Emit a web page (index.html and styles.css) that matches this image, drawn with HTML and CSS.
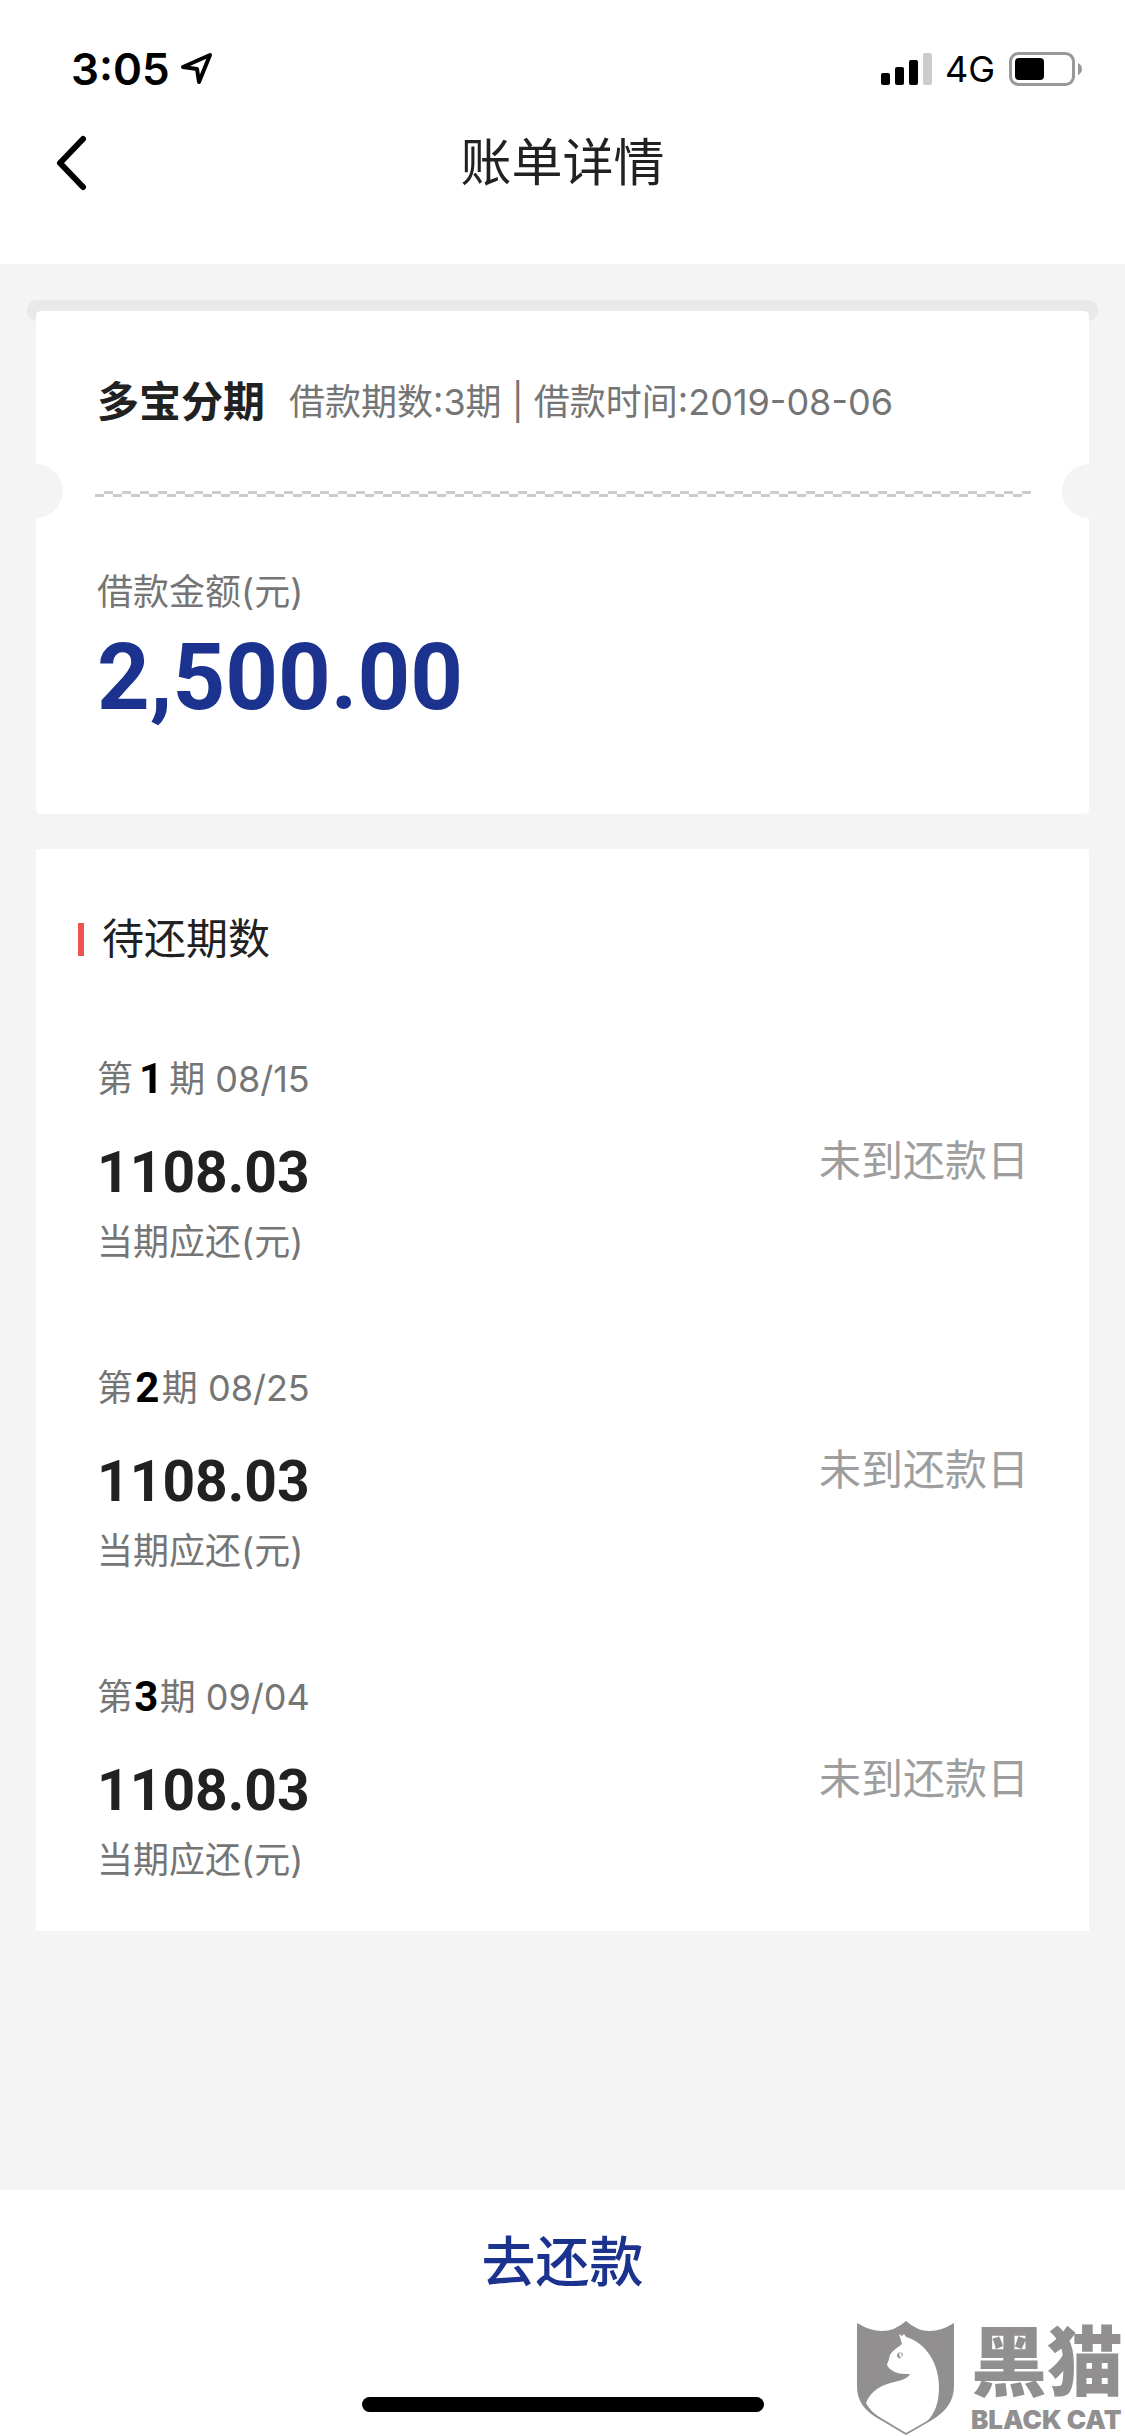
FILE: index.html
```html
<!DOCTYPE html>
<html lang="zh-CN">
<head>
	<meta charset="utf-8">
	<meta name="viewport" content="width=device-width">
	<title>账单详情</title>
	<link rel="stylesheet" href="styles.css">
</head>
<body>
	<header class="header">
		<div class="status-bar">
			<span class="time">3:05</span>
			<svg class="location" width="34" height="34" viewBox="0 0 34 34"><path d="M3 15 30 3 19 30 17 17Z" fill="none" stroke="#000" stroke-width="4" stroke-linejoin="round"/></svg>
			<svg class="signal" width="52" height="34" viewBox="0 0 52 34">
				<rect x="0" y="21" width="9" height="12" rx="2"/>
				<rect x="14" y="15" width="9" height="18" rx="2"/>
				<rect x="28" y="8" width="9" height="25" rx="2"/>
				<rect x="42" y="1" width="9" height="32" rx="2" fill="#ccc"/>
			</svg>
			<span class="network">4G</span>
			<svg class="battery" width="74" height="34" viewBox="0 0 74 34">
				<rect x="1.5" y="1.5" width="63" height="31" rx="8" fill="none" stroke="#999" stroke-width="3"/>
				<rect x="6" y="6" width="29" height="22" rx="4"/>
				<path d="M69 11Q73 13 73 17T69 23Z" fill="#999"/>
			</svg>
		</div>
		<div class="nav-bar">
			<button class="back" type="button" aria-label="返回">
				<svg width="32" height="56" viewBox="0 0 32 56"><path d="M28 4 5 28 28 52" fill="none" stroke="#000" stroke-width="6" stroke-linecap="round" stroke-linejoin="round"/></svg>
			</button>
			<h1 class="title">账单详情</h1>
		</div>
	</header>

	<main class="content">
		<div class="slot"></div>
		<section class="card ticket">
			<div class="ticket-head">
				<h2 class="product">多宝分期</h2>
				<span class="meta">借款期数:3期 | 借款时间:2019-08-06</span>
			</div>
			<div class="tear"></div>
			<div class="ticket-body">
				<div class="label">借款金额(元)</div>
				<div class="total">2,500.00</div>
			</div>
		</section>

		<section class="card plan">
			<h2 class="plan-title">待还期数</h2>
			<ul class="terms">
				<li class="term">
					<div class="term-info">
						<div class="label term-date"><span>第</span><b>1</b><span>期 08/15</span></div>
						<div class="amount">1108.03</div>
						<div class="label">当期应还(元)</div>
					</div>
					<span class="state">未到还款日</span>
				</li>
				<li class="term">
					<div class="term-info">
						<div class="label term-date"><span>第</span><b>2</b><span>期 08/25</span></div>
						<div class="amount">1108.03</div>
						<div class="label">当期应还(元)</div>
					</div>
					<span class="state">未到还款日</span>
				</li>
				<li class="term">
					<div class="term-info">
						<div class="label term-date"><span>第</span><b>3</b><span>期 09/04</span></div>
						<div class="amount">1108.03</div>
						<div class="label">当期应还(元)</div>
					</div>
					<span class="state">未到还款日</span>
				</li>
			</ul>
		</section>
	</main>

	<footer class="footer">
		<button class="pay" type="button">去还款</button>
		<div class="home-indicator"></div>
	</footer>

	<div class="watermark">
		<svg width="98" height="116" viewBox="0 0 98 116">
			<path d="M0 3Q28 20 49 1Q70 20 97 3V66C97 82 88 92 75 100L49 115 22 99C8 91 0 82 0 66Z" fill="#918f90"/>
			<path d="M42 14 45 16 47 14 49 17C70 23 82 45 82 67C82 82 78 94 70 101L49 113 24 98C17 94 12 89 9 83C14 70 25 65 37 62C46 60 51 58 53 54C47 54 42 54 38 52C34 50 30 47 30 44C32 41 32 38 33 35C36 30 40 28 45 24Z" fill="#fff"/>
			<path d="M40 36Q40 33 43 32Q41 35 44 38Q41 39 40 36ZM45 33Q47 35 44 38Q46 35 43 32Z" fill="#918f90"/>
		</svg>
		<div class="watermark-text">
			<span class="watermark-name">黑猫</span>
			<span class="watermark-en">BLACK CAT</span>
		</div>
	</div>
</body>
</html>
```
FILE: styles.css
```css
:root {
	--background: #f4f4f4;
	--blue: #1b338f;
	--text: #212121;
	--grey: #757575;
	--number-font: Roboto, sans-serif;
}

* {
	box-sizing: border-box;
}

body {
	background-color: var(--background);
	color: var(--text);
	display: flex;
	flex-direction: column;
	font-family: Inter, 'Noto Sans CJK SC', sans-serif;
	font-size: 36px;
	line-height: 48px;
	margin: 0;
	min-height: 100vh;
	position: relative;
}

h1,
h2,
ul {
	font-weight: normal;
	margin: 0;
	padding: 0;
}

button {
	background: none;
	border: 0;
	color: inherit;
	font: inherit;
	padding: 0;
}

svg {
	display: block;
}

/* Header */
.header {
	background-color: #fff;
	height: 264px;
}

.status-bar {
	align-items: center;
	color: #000;
	display: flex;
	padding: 45px 42px 0 71px;
}

.time {
	font-size: 44px;
	font-weight: 600;
}

.location {
	margin-left: 10px;
}

.signal {
	margin-left: auto;
}

.network {
	margin: 0 14px 0 12px;
}

.nav-bar {
	align-items: center;
	display: grid;
	grid-template-columns: 1fr auto 1fr;
	padding: 34px 55px 0;
}

.title {
	font-size: 51px;
	line-height: 72px;
}

/* Cards */
.content {
	padding: 36px 27px;
}

.slot {
	background-color: #e9e9e9;
	border-radius: 10px;
	height: 21px;
}

.card {
	background-color: #fff;
	margin: 0 9px;
}

.ticket {
	border-radius: 5px;
	margin-top: -10px;
	padding: 67px 0 74px;
}

.ticket-head {
	align-items: center;
	display: flex;
	gap: 24px;
	padding: 0 61px;
}

.product {
	font-size: 42px;
	font-weight: bold;
}

.meta,
.label {
	color: var(--grey);
}

/* two rows of dashes, offset by half a period */
.tear {
	background:
		repeating-linear-gradient(90deg, transparent 0 9px, #ccc 9px 18px) 0 0 / 100% 3px no-repeat content-box,
		repeating-linear-gradient(90deg, #ccc 0 9px, transparent 9px 18px) 0 3px / 100% 3px no-repeat content-box;
	height: 6px;
	margin: 65px 0 71px;
	padding: 0 58px 0 59px;
	position: relative;
}

.tear::before,
.tear::after {
	background-color: var(--background);
	content: '';
	height: 54px;
	position: absolute;
	top: -27px;
	width: 27px;
}

.tear::before {
	border-radius: 0 27px 27px 0;
	left: 0;
}

.tear::after {
	border-radius: 27px 0 0 27px;
	right: 0;
}

.ticket-body {
	padding: 0 61px;
}

.total {
	color: var(--blue);
	font-family: var(--number-font);
	font-size: 92px;
	font-weight: bold;
	line-height: 124px;
}

/* Repayment plan */
.plan {
	margin-top: 35px;
	padding: 60px 60px 47px 42px;
}

.plan-title {
	align-items: center;
	display: flex;
	font-size: 42px;
	gap: 18px;
	line-height: 60px;
}

.plan-title::before {
	background-color: #ef5350;
	content: '';
	height: 33px;
	width: 6px;
}

.terms {
	display: grid;
	gap: 98px;
	list-style: none;
	margin-top: 86px;
	padding-left: 19px;
}

.term {
	align-items: center;
	display: flex;
	justify-content: space-between;
}

.term-date {
	display: flex;
	justify-content: space-between;
}

.term-date b {
	color: #000;
	font-family: var(--number-font);
	font-size: 42px;
}

.amount {
	font-family: var(--number-font);
	font-size: 57px;
	font-weight: bold;
	line-height: 74px;
	margin: 33px 0 8px;
}

.state {
	color: #9e9e9e;
	font-size: 42px;
}

/* Footer */
.footer {
	align-items: center;
	background-color: #fff;
	display: flex;
	flex-direction: column;
	height: 246px;
	justify-content: space-between;
	margin-top: auto;
	padding: 37px 0 24px;
}

.pay {
	color: var(--blue);
	font-size: 54px;
	font-weight: 500;
	line-height: 72px;
}

.home-indicator {
	background-color: #000;
	border-radius: 8px;
	height: 15px;
	width: 402px;
}

.watermark {
	bottom: 0;
	color: #918f90;
	display: flex;
	gap: 16px;
	position: absolute;
	right: 2px;
}

.watermark-text {
	display: flex;
	flex-direction: column;
}

.watermark-name {
	font-size: 76px;
	font-weight: 900;
	line-height: 84px;
}

.watermark-en {
	font-size: 26px;
	font-weight: 900;
	line-height: 32px;
}
```
